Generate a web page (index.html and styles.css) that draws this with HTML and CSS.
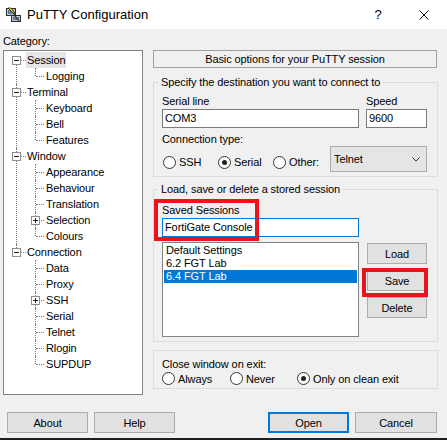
FILE: index.html
```html
<!DOCTYPE html>
<html>
<head>
  <title>PuTTY Configuration</title>
  <link rel="stylesheet" href="styles.css">
</head>
<body>

<div class="window">
  <div class="titlebar">
    <svg class="app-icon" width="17" height="16" viewBox="0 0 17 16">
      <rect x="1.5" y="1.5" width="9" height="7" fill="#c6c6c6" stroke="#2b2b2b"/>
      <rect x="3" y="3" width="6" height="4" fill="#5a7fb0"/>
      <rect x="6.5" y="8.5" width="9" height="6" fill="#c6c6c6" stroke="#2b2b2b"/>
      <rect x="8" y="10" width="6" height="3" fill="#5a7fb0"/>
      <polygon points="3,1 6,1 10,6 8.5,6.5 14,14 9,8.5 10.5,8 5,3" fill="#f5e000" stroke="#1a1a1a" stroke-width="0.8"/>
    </svg>
    <span class="title">PuTTY Configuration</span>
    <span class="cap-btn cap-help">?</span>
    <span class="cap-btn">
      <svg width="10" height="10" viewBox="0 0 10 10"><path d="M0.5 0.5 L9.5 9.5 M9.5 0.5 L0.5 9.5" stroke="#111" stroke-width="1"/></svg>
    </span>
  </div>

  <div class="content">
    <div class="main">
      <div class="cat-col">
        <div class="cat-label">Category:</div>
        <div class="tree">
          <ul class="root">
            <li><span class="exp"></span><span class="lbl sel">Session</span>
              <ul>
                <li><span class="lbl">Logging</span></li>
              </ul>
            </li>
            <li><span class="exp"></span><span class="lbl">Terminal</span>
              <ul>
                <li><span class="lbl">Keyboard</span></li>
                <li><span class="lbl">Bell</span></li>
                <li><span class="lbl">Features</span></li>
              </ul>
            </li>
            <li><span class="exp"></span><span class="lbl">Window</span>
              <ul>
                <li><span class="lbl">Appearance</span></li>
                <li><span class="lbl">Behaviour</span></li>
                <li><span class="lbl">Translation</span></li>
                <li><span class="exp plus"></span><span class="lbl">Selection</span></li>
                <li><span class="lbl">Colours</span></li>
              </ul>
            </li>
            <li><span class="exp"></span><span class="lbl">Connection</span>
              <ul>
                <li><span class="lbl">Data</span></li>
                <li><span class="lbl">Proxy</span></li>
                <li><span class="exp plus"></span><span class="lbl">SSH</span></li>
                <li><span class="lbl">Serial</span></li>
                <li><span class="lbl">Telnet</span></li>
                <li><span class="lbl">Rlogin</span></li>
                <li><span class="lbl">SUPDUP</span></li>
              </ul>
            </li>
          </ul>
        </div>
      </div>

      <div class="panel">
        <div class="panel-head">Basic options for your PuTTY session</div>

        <fieldset class="group">
          <legend>Specify the destination you want to connect to</legend>
          <div class="dest-grid">
            <span class="text-line">Serial line</span>
            <span class="text-line">Speed</span>
            <div class="field">COM3</div>
            <div class="field">9600</div>
          </div>
          <div class="text-line conn-label">Connection type:</div>
          <div class="conn-row">
            <span class="radio-item w55"><span class="radio"></span>SSH</span>
            <span class="radio-item w55"><span class="radio on"></span>Serial</span>
            <span class="radio-item w55"><span class="radio"></span>Other:</span>
            <div class="combo">
              <span>Telnet</span>
              <svg width="8" height="5" viewBox="0 0 8 5"><path d="M0.5 0.5 L4 4 L7.5 0.5" fill="none" stroke="#333" stroke-width="1"/></svg>
            </div>
          </div>
        </fieldset>

        <fieldset class="group group-store">
          <legend>Load, save or delete a stored session</legend>
          <div class="store">
            <div class="store-left">
              <div class="text-line saved-label">Saved Sessions</div>
              <div class="field focused">FortiGate Console</div>
              <div class="list">
                <div class="item">Default Settings</div>
                <div class="item">6.2 FGT Lab</div>
                <div class="item picked">6.4 FGT Lab</div>
              </div>
            </div>
            <div class="store-right">
              <div class="btn">Load</div>
              <div class="btn">Save</div>
              <div class="btn">Delete</div>
            </div>
          </div>
        </fieldset>

        <fieldset class="group group-exit">
          <div class="text-line">Close window on exit:</div>
          <div class="exit-row">
            <span class="radio-item w68"><span class="radio"></span>Always</span>
            <span class="radio-item w67"><span class="radio"></span>Never</span>
            <span class="radio-item"><span class="radio on"></span>Only on clean exit</span>
          </div>
        </fieldset>

        <div class="mark mark-saved"></div>
        <div class="mark mark-save"></div>
      </div>
    </div>

    <div class="buttons">
      <div class="btn wide">About</div>
      <div class="btn wide">Help</div>
      <div class="btn wide default push">Open</div>
      <div class="btn wide cancel">Cancel</div>
    </div>
  </div>
</div>

</body>
</html>
```

FILE: styles.css
```css
body {
  margin: 0;
  font-family: "Liberation Sans", Arial, sans-serif;
  font-size: 11px;
  letter-spacing: -0.1px;
  color: #000;
}

.window {
  width: 447px;
  height: 440px;
  box-sizing: border-box;
  background-color: #f0f0f0;
  border-bottom: 2px solid #1f1f1f;
  overflow: hidden;
}

.titlebar {
  height: 29px;
  background: #fff;
  display: flex;
  align-items: center;
}

.app-icon {
  margin-left: 5px;
  flex: none;
}

.title {
  margin-left: 5px;
  font-size: 13px;
  letter-spacing: 0;
}

.cap-btn {
  width: 46px;
  height: 29px;
  display: flex;
  align-items: center;
  justify-content: center;
  font-size: 13px;
}

.cap-help {
  margin-left: auto;
}

.content {
  padding: 5px 9px 0 3px;
}

.main {
  display: flex;
  align-items: flex-start;
  gap: 10px;
}

.cat-col {
  width: 140px;
  flex: none;
}

.cat-label {
  line-height: 14px;
  margin-bottom: 2px;
}

/* tree view */
.tree {
  height: 345px;
  box-sizing: border-box;
  border: 1px solid #828282;
  background: #fff;
  padding-top: 1px;
}

.tree ul {
  list-style: none;
  margin: 0;
  padding: 0;
}

.tree li {
  position: relative;
  line-height: 16px;
}

.root > li {
  padding-left: 22px;
}

.root > li > ul > li {
  padding-left: 19px;
}

.tree li::before,
.tree li::after {
  content: "";
  position: absolute;
  border: 0 dotted #7a7a7a;
}

.root > li::before {
  left: 17px;
  top: 8px;
  width: 5px;
  border-top-width: 1px;
}

.root > li::after {
  left: 12px;
  top: 0;
  bottom: 0;
  border-left-width: 1px;
}

.root > li:first-child::after {
  top: 8px;
}

.root > li:last-child::after {
  bottom: auto;
  height: 8px;
}

.root > li > ul > li::before {
  left: 10px;
  top: 8px;
  width: 8px;
  border-top-width: 1px;
}

.root > li > ul > li::after {
  left: 9px;
  top: 0;
  bottom: 0;
  border-left-width: 1px;
}

.root > li > ul > li:last-child::after {
  bottom: auto;
  height: 8px;
}

.lbl {
  display: inline-block;
  height: 16px;
  padding: 0 1px;
}

.lbl.sel {
  background: #e5e5e5;
}

.exp {
  position: absolute;
  z-index: 1;
  left: 8px;
  top: 4px;
  width: 9px;
  height: 9px;
  box-sizing: border-box;
  border: 1px solid #8e8f8f;
  background: #fff;
}

.root > li > ul > li > .exp {
  left: 5px;
}

.exp::before {
  content: "";
  position: absolute;
  left: 1px;
  top: 3px;
  width: 5px;
  height: 1px;
  background: #222;
}

.exp.plus::after {
  content: "";
  position: absolute;
  left: 3px;
  top: 1px;
  width: 1px;
  height: 5px;
  background: #222;
}

/* right side */
.panel {
  position: relative;
  width: 285px;
  flex: none;
  margin-top: 16px;
}

.panel-head {
  width: 284px;
  height: 18px;
  box-sizing: border-box;
  border: 1px solid #a0a0a0;
  text-align: center;
  line-height: 16px;
}

.group {
  margin: 7px 0 0 0;
  padding: 0 8px 4px 8px;
  border: 1px solid #dcdcdc;
  min-width: 0;
}

.group legend {
  padding: 0 3px;
  margin-left: -4px;
  line-height: 14px;
}

.text-line {
  line-height: 14px;
}

.dest-grid {
  display: grid;
  grid-template-columns: 197px 61px;
  column-gap: 7px;
  margin-top: 5px;
}

.dest-grid .text-line {
  margin-bottom: 1px;
}

.field {
  height: 19px;
  box-sizing: border-box;
  border: 1px solid #7a7a7a;
  background: #fff;
  padding-left: 2px;
  line-height: 17px;
}

.field.focused {
  border-color: #0078d7;
}

.conn-label {
  margin-top: 4px;
}

.conn-row,
.exit-row {
  display: flex;
  align-items: center;
}

.conn-row .radio-item {
  margin-top: 6px;
}

.conn-row .w55:first-child {
  margin-left: 1px;
}

.radio-item {
  display: flex;
  align-items: center;
  line-height: 14px;
}

.w55 { width: 55px; }
.w68 { width: 68px; }
.w67 { width: 67px; }

.radio {
  position: relative;
  width: 13px;
  height: 13px;
  box-sizing: border-box;
  border: 1px solid #333;
  border-radius: 50%;
  background: #fff;
  margin-right: 3px;
  flex: none;
}

.radio.on::after {
  content: "";
  position: absolute;
  left: 3px;
  top: 3px;
  width: 5px;
  height: 5px;
  border-radius: 50%;
  background: #222;
}

.combo {
  margin-left: 2px;
  width: 97px;
  height: 26px;
  box-sizing: border-box;
  border: 1px solid #acacac;
  background: #e5e5e5;
  display: flex;
  align-items: center;
  justify-content: space-between;
  padding: 0 6px 0 3px;
}

.group-store {
  margin-top: 5px;
}

.store {
  display: flex;
  gap: 8px;
}

.store-left {
  width: 197px;
}

.saved-label {
  margin-top: 7px;
  margin-bottom: 1px;
}

.list {
  margin-top: 5px;
  height: 95px;
  box-sizing: border-box;
  border: 1px solid #828282;
  background: #fff;
  padding: 1px;
}

.item {
  height: 13px;
  line-height: 13px;
  padding-left: 2px;
}

.item.picked {
  background: #0078d7;
  color: #fff;
}

.store-right {
  width: 60px;
  padding-top: 47px;
  display: flex;
  flex-direction: column;
  gap: 6px;
}

.btn {
  height: 21px;
  box-sizing: border-box;
  border: 1px solid #adadad;
  background: #e1e1e1;
  display: flex;
  align-items: center;
  justify-content: center;
}

.group-exit {
  margin-top: 8px;
  padding: 6px 8px 2px 8px;
}

.exit-row {
  height: 15px;
}

/* annotation boxes drawn over the dialog */
.mark {
  position: absolute;
  border: 4px solid #e8151b;
  box-sizing: border-box;
}

.mark-saved {
  left: 1px;
  top: 149px;
  width: 105px;
  height: 42px;
}

.mark-save {
  left: 209px;
  top: 218px;
  width: 66px;
  height: 29px;
}

.buttons {
  display: flex;
  gap: 6px;
  margin: 17px 1px 0 4px;
}

.btn.wide {
  width: 81px;
}

.btn.default {
  border: 2px solid #0078d7;
}

.btn.push {
  margin-left: auto;
}

.btn.cancel {
  width: 82px;
}
```
